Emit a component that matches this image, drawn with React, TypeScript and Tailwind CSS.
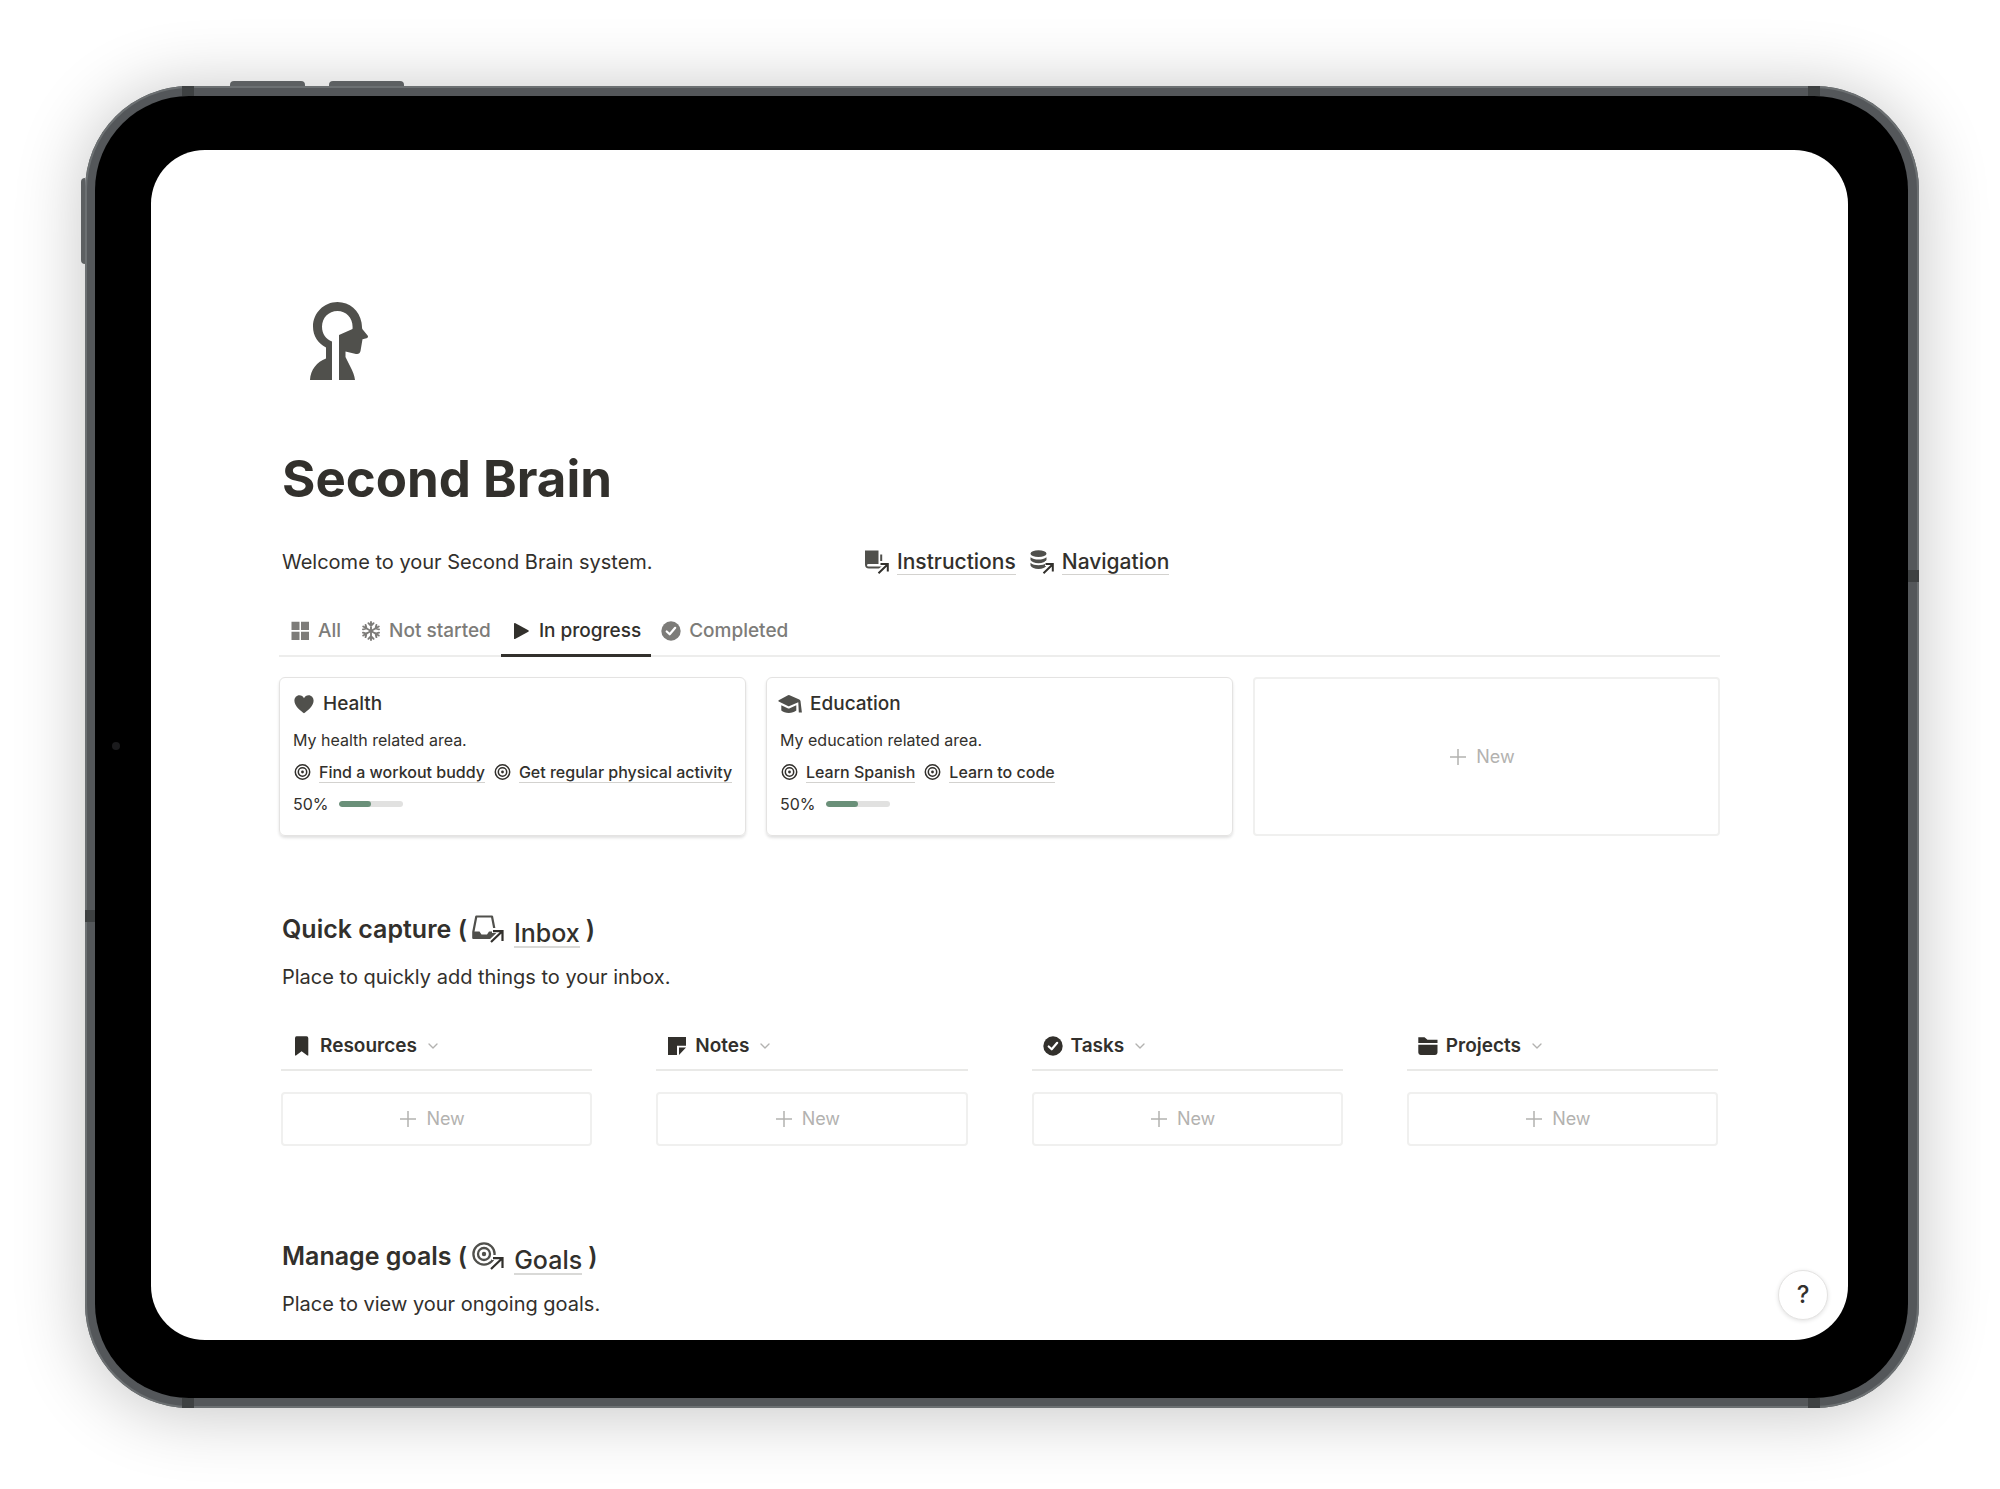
import type { ReactNode } from "react";
import { ChevronDown } from "lucide-react";

type IconProps = { className?: string };

const HeadIcon = ({ className }: IconProps) => (
  <svg viewBox="0 0 58 78" className={className} fill="currentColor" aria-hidden="true">
    <path d="M22 39.500V78H0C.5 67.500 7 60 16 56.500V45.500C8 41.500 3 34 3 24.500C3 11 14 0 27.500 0C39.500 0 49.500 8.500 51.500 20.500C51.900 23 52 26 52.300 27L57.600 33.500C58.400 34.800 58 35.800 56.500 36.200L52.500 37.200L50.500 49C50 51.400 48.500 52.300 46 51.900L35.500 49.500V55L40 64C43 69.500 44.500 73.500 45 78H29V33L42.500 27C43.500 16.500 36.500 9 27.500 9C18.500 9 12 16 12 24.500C12 32 16 37 22 39.500Z" />
  </svg>
);

const GridIcon = ({ className }: IconProps) => (
  <svg viewBox="0 0 20 20" className={className} fill="currentColor" aria-hidden="true">
    <path d="M1.500 .8h8v8.200h-8zM11 .8h8v8.200h-8zM1.500 10.700h8v8.200h-8zM11 10.700h8v8.200h-8z" />
  </svg>
);

const SnowIcon = ({ className }: IconProps) => (
  <svg viewBox="0 0 20 20" className={className} fill="none" stroke="currentColor" strokeWidth="1.900" strokeLinecap="round" aria-hidden="true">
    {[0, 60, 120, 180, 240, 300].map((angle) => (
      <path key={angle} transform={`rotate(${angle} 10 10)`} d="M10 10V1M7.400 2.200L10 4.800L12.600 2.200" />
    ))}
  </svg>
);

const PlayIcon = ({ className }: IconProps) => (
  <svg viewBox="0 0 20 20" className={className} fill="currentColor" aria-hidden="true">
    <path d="M3 2.600C3 2 3.500 1.800 4 2L17.300 9.200C17.900 9.600 17.900 10.400 17.300 10.800L4 18C3.500 18.200 3 18 3 17.400Z" />
  </svg>
);

const CheckIcon = ({ className }: IconProps) => (
  <svg viewBox="0 0 20 20" className={className} aria-hidden="true">
    <circle cx="10" cy="10" r="9.700" fill="currentColor" />
    <path d="M5.700 10.500L8.700 13.300L14.200 6.800" fill="none" stroke="#fff" strokeWidth="2.200" strokeLinecap="round" strokeLinejoin="round" />
  </svg>
);

const HeartIcon = ({ className }: IconProps) => (
  <svg viewBox="0 0 20 20" className={className} fill="currentColor" aria-hidden="true">
    <path d="M10 19.300C7.500 17.500 .4 12.500 .4 6.800C.4 3.500 2.600 1.200 5.400 1.200C7.400 1.200 9.200 2.300 10 4.200C10.800 2.300 12.600 1.200 14.600 1.200C17.400 1.200 19.600 3.500 19.600 6.800C19.600 12.500 12.500 17.500 10 19.300Z" />
  </svg>
);

const CapIcon = ({ className }: IconProps) => (
  <svg viewBox="2 0 22 20" className={`overflow-visible ${className}`} fill="currentColor" aria-hidden="true">
    <path d="M10 1.200Q10.800.8 11.600 1.200L21.300 5.500Q22.300 6 22.500 7L23.900 18.500H20.800L20.300 8.200L11.500 12Q10.700 12.400 9.900 12L.7 7.600Q-.2 7 .7 6.300Z" />
    <path d="M3.300 11.200L9.600 14.300Q10.700 14.800 11.800 14.300L18.300 11.300V16.600C16.500 18.200 13.800 19 10.800 19C7.800 19 5 18.200 3.300 16.600Z" />
  </svg>
);

const TargetIcon = ({ className }: IconProps) => (
  <svg viewBox="0 0 18 18" className={className} fill="none" stroke="currentColor" strokeWidth="1.500" aria-hidden="true">
    <circle cx="9.500" cy="9" r="7.200" />
    <circle cx="9.500" cy="9" r="4.200" />
    <circle cx="9.500" cy="9" r="1.400" fill="currentColor" stroke="none" />
  </svg>
);

// small arrow in the corner of every linked page icon
const LinkArrow = () => (
  <>
    <path d="M12.500 23.500L22.300 14.300M15 13.600H22.800V21.600" stroke="#fff" strokeWidth="5" fill="none" />
    <path d="M13.500 23.200L22.300 14.700M15.500 14H22.800V21.500" stroke="#32302c" strokeWidth="2" fill="none" />
  </>
);

const BookLinkIcon = ({ className }: IconProps) => (
  <svg viewBox="0 0 24 24" className={className} aria-hidden="true">
    <path d="M0 .5H13.500V14H3.500Q2 14 2 15.200T3.500 16.500H18V18.500H4Q0 18.500 0 14.500Z" fill="#50504c" />
    <path d="M16.200 4.500V15" stroke="#50504c" strokeWidth="2" />
    <LinkArrow />
  </svg>
);

const DatabaseLinkIcon = ({ className }: IconProps) => (
  <svg viewBox="0 0 24 24" className={className} aria-hidden="true">
    <g fill="#50504c">
      <ellipse cx="8.500" cy="3.700" rx="8" ry="3.400" />
      <path d="M.5 7.200C2.500 9 5.200 9.500 8.500 9.500S14.500 9 16.500 7.200V10C15.500 12 12.500 13.200 8.500 13.200S1.500 12 .5 10Z" />
      <path d="M.5 12.800C2.500 14.600 5.200 15.200 8.500 15.200S14.500 14.600 16.500 12.800V15.500C15.500 17.700 12.500 18.900 8.500 18.900S1.500 17.700 .5 15.500Z" />
    </g>
    <LinkArrow />
  </svg>
);

const InboxLinkIcon = ({ className }: IconProps) => (
  <svg viewBox="0 0 32 28" className={className} aria-hidden="true">
    <path d="M4.300 1.500H20L23 17V23H1.300V17Z" fill="none" stroke="#50504c" strokeWidth="2.200" strokeLinejoin="round" />
    <path d="M1 16.500H7.500L9.500 19.500H15L17 16.500H23.500V24H1Z" fill="#50504c" />
    <path d="M17.500 28L30 16M20 15.500H31V26.500" stroke="#fff" strokeWidth="5" fill="none" />
    <path d="M19 27L29.500 17M21 16.200H30.500V26" stroke="#32302c" strokeWidth="2.200" fill="none" />
  </svg>
);

const GoalsLinkIcon = ({ className }: IconProps) => (
  <svg viewBox="0 0 32 28" className={className} aria-hidden="true">
    <g fill="none" stroke="#50504c" strokeWidth="2.300">
      <circle cx="12" cy="12" r="10.600" />
      <circle cx="12" cy="12" r="6" />
    </g>
    <circle cx="12" cy="12" r="2.200" fill="#50504c" />
    <path d="M17.500 28L30 16M20 15.500H31V26.500" stroke="#fff" strokeWidth="5" fill="none" />
    <path d="M19 27L29.500 17M21 16.200H30.500V26" stroke="#32302c" strokeWidth="2.200" fill="none" />
  </svg>
);

const BookmarkIcon = ({ className }: IconProps) => (
  <svg viewBox="0 0 20 20" className={className} fill="currentColor" aria-hidden="true">
    <path d="M4.500 .3H14.500Q16.300 .3 16.300 2.200V19.400H15.300L9.600 15.200L4 19.400H3V2.200Q3 .3 4.500 .3Z" />
  </svg>
);

const NoteIcon = ({ className }: IconProps) => (
  <svg viewBox="0 0 20 20" className={className} fill="currentColor" aria-hidden="true">
    <path d="M1 1H19V9.700H10V19H1ZM12 11.500H19L12 19Z" />
  </svg>
);

const FolderIcon = ({ className }: IconProps) => (
  <svg viewBox="0 0 20 20" className={className} fill="currentColor" aria-hidden="true">
    <path d="M.3 1.200H6.500L9.500 3.800H19.500V7H.3ZM.3 8.700H19.500V16.600Q19.500 18.900 17.200 18.900H2.600Q.3 18.900 .3 16.600Z" />
  </svg>
);

const PlusIcon = ({ className }: IconProps) => (
  <svg viewBox="0 0 16 16" className={className} fill="none" stroke="currentColor" strokeWidth="1.500" aria-hidden="true">
    <path d="M8 0V16M0 8H16" />
  </svg>
);

const tabs = [
  { label: "All", Icon: GridIcon },
  { label: "Not started", Icon: SnowIcon },
  { label: "In progress", Icon: PlayIcon, active: true },
  { label: "Completed", Icon: CheckIcon },
];

const areas = [
  {
    title: "Health",
    Icon: HeartIcon,
    description: "My health related area.",
    goals: ["Find a workout buddy", "Get regular physical activity"],
    progress: 50,
  },
  {
    title: "Education",
    Icon: CapIcon,
    description: "My education related area.",
    goals: ["Learn Spanish", "Learn to code"],
    progress: 50,
  },
];

const captures = [
  { label: "Resources", Icon: BookmarkIcon },
  { label: "Notes", Icon: NoteIcon },
  { label: "Tasks", Icon: CheckIcon },
  { label: "Projects", Icon: FolderIcon },
];

const NewButton = ({ className = "" }: IconProps) => (
  <button
    className={`flex w-full items-center justify-center gap-[10px] rounded border-2 border-[#f0f0ef] pr-2 text-[18px] leading-6 text-[#b3b2b0] ${className}`}
  >
    <PlusIcon className="size-4" />
    New
  </button>
);

const SectionHeading = ({ title, link, icon }: { title: string; link: string; icon: ReactNode }) => (
  <h2 className="flex items-start px-px text-[25px] leading-9 font-semibold">
    <span>{title} (</span>
    <a href="#" className="flex items-start gap-[10px] pt-1 pl-[5px] font-medium">
      {icon}
      <span className="mt-[5px] border-b-2 border-[#d9d9d7] leading-[26px]">{link}</span>
    </a>
    <span className="pl-[6px]">)</span>
  </h2>
);

const PageLink = ({ label, icon }: { label: string; icon: ReactNode }) => (
  <a href="#" className="flex items-center gap-2">
    {icon}
    <span className="border-b border-[#d3d2cf] leading-6">{label}</span>
  </a>
);

const App = () => {
  return (
    <div className="min-h-screen overflow-hidden bg-white pt-[86px] pr-[81px] pb-20 pl-[85px] font-['Inter',sans-serif] text-[#32302c]">
      <div className="relative rounded-[104px] bg-[#54575a] p-[10px] pr-[11px] shadow-[0_4px_70px_rgba(0,0,0,0.24),inset_0_0_0_2px_#6c7072]">
        {/* Hardware buttons */}
        <span className="absolute -top-[5px] left-[145px] h-[5px] w-[75px] rounded-t bg-[#5d6062]" />
        <span className="absolute -top-[5px] left-[244px] h-[5px] w-[75px] rounded-t bg-[#5d6062]" />
        <span className="absolute top-[92px] -left-1 h-[86px] w-1 rounded-l bg-[#5d6062]" />
        {/* Antenna bands */}
        <span className="absolute top-0 left-[97px] h-[10px] w-3 bg-[#3e4142]" />
        <span className="absolute top-0 right-[99px] h-[10px] w-3 bg-[#3e4142]" />
        <span className="absolute bottom-0 left-[97px] h-[10px] w-3 bg-[#3e4142]" />
        <span className="absolute right-[99px] bottom-0 h-[10px] w-3 bg-[#3e4142]" />
        <span className="absolute top-[824px] left-0 h-3 w-[10px] bg-[#3e4142]" />
        <span className="absolute top-[484px] right-0 h-3 w-[11px] bg-[#3e4142]" />

        <div className="relative rounded-[94px] bg-black pt-[54px] pr-[60px] pb-[58px] pl-14">
          <span className="absolute top-[646px] left-[17px] size-2 rounded-full bg-[#1b1b1d]" />

          <main className="relative rounded-[54px] bg-white px-32 pt-[152px] pb-5">
            <HeadIcon className="ml-[31px] h-[78px] w-[58px] text-[#50504c]" />
            <h1 className="mt-16 px-[3px] text-[51px] leading-[70px] font-bold">Second Brain</h1>

            <div className="mt-8 grid grid-cols-[583px_1fr] items-center px-[3px] leading-8">
              <p className="text-[20px]">Welcome to your Second Brain system.</p>
              <nav className="flex gap-[14px] text-[21px] font-medium">
                <PageLink label="Instructions" icon={<BookLinkIcon className="size-6" />} />
                <PageLink label="Navigation" icon={<DatabaseLinkIcon className="size-6" />} />
              </nav>
            </div>

            <div role="tablist" className="mt-8 flex border-b-2 border-[#ededec]">
              {tabs.map(({ label, Icon, active }) => (
                <button
                  key={label}
                  role="tab"
                  aria-selected={!!active}
                  className={`-mb-[2px] flex items-center gap-2 border-b-[3px] px-[10px] pt-[7px] pb-[9px] text-[19px] leading-7 font-medium first:pl-[11px] ${
                    active ? "border-[#32302c] text-[#32302c]" : "border-transparent text-[#7d7c79]"
                  }`}
                >
                  <Icon className="size-5" />
                  {label}
                </button>
              ))}
            </div>

            <div className="mt-5 grid grid-cols-3 gap-5">
              {areas.map(({ title, Icon, description, goals, progress }) => (
                <article
                  key={title}
                  className="rounded-md border border-[#e4e3e2] px-[13px] pt-[10px] pb-[15px] text-[16px] leading-8 shadow-[0_2px_3px_rgba(0,0,0,0.12)]"
                >
                  <h3 className="flex items-center gap-2 text-[19px] font-medium">
                    <Icon className="h-5 w-[22px] text-[#50504c]" />
                    {title}
                  </h3>
                  <p className="mt-1">{description}</p>
                  <div className="flex h-8 gap-2 whitespace-nowrap">
                    {goals.map((goal) => (
                      <a key={goal} href="#" className="flex items-center gap-2 font-medium">
                        <TargetIcon className="size-[18px]" />
                        <span className="border-b border-[#d3d2cf] leading-5">{goal}</span>
                      </a>
                    ))}
                  </div>
                  <div className="flex items-center gap-[10px]">
                    {progress}%
                    <div
                      role="progressbar"
                      aria-label={title}
                      aria-valuenow={progress}
                      className="h-[6px] w-16 overflow-hidden rounded-full bg-[#e1e1e0]"
                    >
                      <div className="h-full rounded-full bg-[#6a9079]" style={{ width: `${progress}%` }} />
                    </div>
                  </div>
                </article>
              ))}
              <NewButton />
            </div>

            <section className="mt-[75px] px-[2px]">
              <SectionHeading title="Quick capture" link="Inbox" icon={<InboxLinkIcon className="h-7 w-8" />} />
              <p className="mt-[13px] px-px text-[20px] leading-8">Place to quickly add things to your inbox.</p>

              <div className="mt-[35px] grid grid-cols-4 gap-16">
                {captures.map(({ label, Icon }) => (
                  <div key={label}>
                    <button className="flex w-full items-center gap-2 border-b-2 border-[#e9e9e7] px-[11px] pt-1 pb-[9px] text-[19px] leading-7 font-semibold">
                      <Icon className="size-5" />
                      {label}
                      <ChevronDown className="size-4 text-[#b3b2b0]" />
                    </button>
                    <NewButton className="mt-[21px] h-[54px]" />
                  </div>
                ))}
              </div>
            </section>

            <section className="mt-[92px] px-[2px]">
              <SectionHeading title="Manage goals" link="Goals" icon={<GoalsLinkIcon className="h-7 w-8" />} />
              <p className="mt-[13px] px-px text-[20px] leading-8">Place to view your ongoing goals.</p>
            </section>

            <button
              aria-label="Help"
              className="absolute right-5 bottom-5 size-[50px] rounded-full border border-[#e4e3e2] bg-white text-2xl font-medium shadow-[0_1px_4px_rgba(0,0,0,0.12)]"
            >
              ?
            </button>
          </main>
        </div>
      </div>
    </div>
  );
};

export default App;
